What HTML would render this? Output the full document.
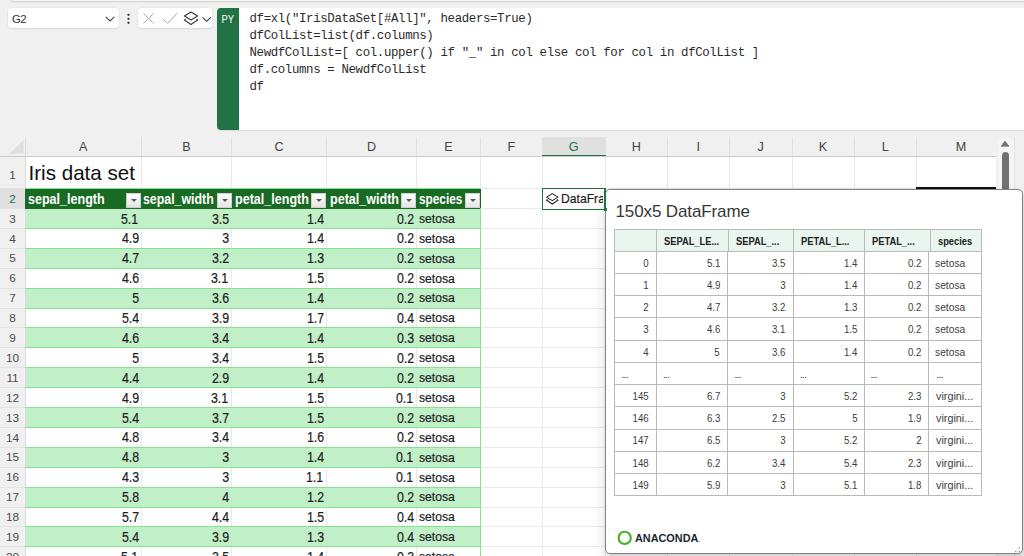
<!DOCTYPE html>
<html><head><meta charset="utf-8"><title>Excel</title>
<style>
*{box-sizing:border-box;margin:0;padding:0}
html,body{width:1024px;height:556px;overflow:hidden;background:#f0f0f0;font-family:"Liberation Sans",sans-serif}
#app{position:relative;width:1024px;height:556px;overflow:hidden;background:#f0f0f0}
.abs{position:absolute}
.box{position:absolute;background:#fff;border-radius:4px;box-shadow:0 0 0 .5px #e2e2e2,0 1px 1.5px rgba(0,0,0,.12)}
.code{position:absolute;left:249.5px;top:11.25px;font-family:"Liberation Mono",monospace;font-size:12.4px;letter-spacing:-.361px;line-height:17px;color:#2b2b2b;white-space:pre}
.ch{position:absolute;top:137.7px;height:19px;text-align:center;font-size:12.6px;line-height:18px;color:#444}
.rh{position:absolute;left:0;width:25px;text-align:center;font-size:11.8px;color:#4c4c4c;height:20px;line-height:20px}
.vl{position:absolute;width:1px;background:#e9e9e9}
.hl{position:absolute;height:1px;background:#e9e9e9}
.band{position:absolute;left:25.5px;width:454.7px;height:20px}
.c{position:absolute;height:20px;line-height:20px;font-size:14.5px;color:#1c1c1c;white-space:nowrap;-webkit-text-stroke:.2px #1c1c1c}
.c span{display:inline-block;transform:scaleX(.855)}
.r{text-align:right}.r span{transform-origin:100% 50%}
.l{font-size:13.7px}.l span{transform-origin:0 50%;transform:scaleX(.89)}
.th{position:absolute;top:189.5px;height:20px;line-height:19px;font-size:14.4px;font-weight:bold;color:#fff;white-space:nowrap}
.th span{display:inline-block;transform-origin:0 50%;transform:scaleX(.872)}
.fb{position:absolute;top:192.5px;width:15px;height:15px;background:linear-gradient(#fff,#e4e4e4);border:.5px solid #d0d0d0}
.fb:after{content:"";position:absolute;left:4px;top:5.8px;border:3px solid transparent;border-top:3.2px solid #5a5a5a;border-bottom:0}
.pt{position:absolute;font-size:11.8px;color:#3d3d3d;white-space:nowrap;line-height:22px;height:22px}
.pt span{display:inline-block;transform:scaleX(.82);transform-origin:100% 50%}
.pl span{transform-origin:0 50%;transform:scaleX(.87)}
.ph{font-weight:bold;color:#222;font-size:10.9px}.ph span{transform-origin:0 50%;transform:scaleX(.855)}
</style></head><body><div id="app">

<div class="abs" style="left:10.3px;top:-6px;width:1030px;height:7.4px;background:#f4f4f4;border-radius:4px;box-shadow:0 .6px 2.2px rgba(0,0,0,.2)"></div>
<div class="box" style="left:7.7px;top:8.1px;width:111.4px;height:20.3px"></div>
<div class="abs" style="left:12px;top:10px;font-size:11.4px;line-height:19px;color:#333;letter-spacing:-.6px">G2</div>
<svg class="abs" style="left:104px;top:15px" width="12" height="8" viewBox="0 0 12 8"><path d="M1.7 1.8 L6 6 L10.3 1.8" fill="none" stroke="#444" stroke-width="1.1"/></svg>
<svg class="abs" style="left:126px;top:12px" width="5" height="14" viewBox="0 0 5 14"><circle cx="2.5" cy="2.8" r="1.15" fill="#333"/><circle cx="2.5" cy="6.8" r="1.15" fill="#333"/><circle cx="2.5" cy="10.8" r="1.15" fill="#333"/></svg>
<div class="box" style="left:137.6px;top:8.1px;width:74.6px;height:20.3px"></div>
<svg class="abs" style="left:137px;top:8px" width="76" height="21" viewBox="0 0 76 21"><path d="M6.5 5.5 L16.5 15.5 M16.5 5.5 L6.5 15.5" stroke="#a8a8a8" stroke-width="1" fill="none"/><path d="M26 11 L30.8 15.3 L40 5.2" stroke="#a8a8a8" stroke-width="1" fill="none"/><path d="M54 4 L60.6 8 L54 12 L47.4 8 Z" stroke="#3a3a3a" stroke-width="1.15" fill="none" stroke-linejoin="round"/><path d="M48.6 11.2 L47.4 12 L54 16.4 L60.6 12 L59.4 11.2" stroke="#3a3a3a" stroke-width="1.15" fill="none" stroke-linejoin="round"/><path d="M65.6 9.3 L69.7 13.3 L73.8 9.3" stroke="#3a3a3a" stroke-width="1.1" fill="none"/></svg>
<div class="abs" style="left:217.2px;top:8.1px;width:820px;height:122.1px;background:#fff;border-radius:4px 0 0 4px;box-shadow:0 .5px 1px rgba(0,0,0,.09)"></div>
<div class="abs" style="left:217.2px;top:8.1px;width:21.4px;height:122.1px;background:#217346;border-radius:4px 0 0 4px"></div>
<div class="abs" style="left:217.2px;top:10.1px;width:21.4px;text-align:center;font-size:11.8px;line-height:19px;color:#fff"><span style="display:inline-block;transform:scaleX(.8)">PY</span></div>
<div class="code">df=xl("IrisDataSet[#All]", headers=True)
dfColList=list(df.columns)
NewdfColList=[ col.upper() if "_" in col else col for col in dfColList ]
df.columns = NewdfColList
df</div>
<div class="abs" style="left:25px;top:156px;width:971px;height:400px;background:#fff"></div>
<div class="vl" style="left:141.0px;top:156px;height:400px"></div>
<div class="vl" style="left:231.0px;top:156px;height:400px"></div>
<div class="vl" style="left:326.0px;top:156px;height:400px"></div>
<div class="vl" style="left:416.0px;top:156px;height:400px"></div>
<div class="vl" style="left:480.0px;top:156px;height:400px"></div>
<div class="vl" style="left:541.5px;top:156px;height:400px"></div>
<div class="vl" style="left:605.0px;top:156px;height:400px"></div>
<div class="vl" style="left:666.5px;top:156px;height:400px"></div>
<div class="vl" style="left:729.0px;top:156px;height:400px"></div>
<div class="vl" style="left:791.5px;top:156px;height:400px"></div>
<div class="vl" style="left:853.5px;top:156px;height:400px"></div>
<div class="vl" style="left:916.0px;top:156px;height:400px"></div>
<div class="hl" style="left:25px;top:188px;width:971px"></div>
<div class="hl" style="left:25px;top:208.0px;width:971px"></div>
<div class="hl" style="left:25px;top:227.9px;width:971px"></div>
<div class="hl" style="left:25px;top:247.79999999999998px;width:971px"></div>
<div class="hl" style="left:25px;top:267.70000000000005px;width:971px"></div>
<div class="hl" style="left:25px;top:287.6px;width:971px"></div>
<div class="hl" style="left:25px;top:307.5px;width:971px"></div>
<div class="hl" style="left:25px;top:327.40000000000003px;width:971px"></div>
<div class="hl" style="left:25px;top:347.3px;width:971px"></div>
<div class="hl" style="left:25px;top:367.20000000000005px;width:971px"></div>
<div class="hl" style="left:25px;top:387.1px;width:971px"></div>
<div class="hl" style="left:25px;top:407.0px;width:971px"></div>
<div class="hl" style="left:25px;top:426.90000000000003px;width:971px"></div>
<div class="hl" style="left:25px;top:446.8px;width:971px"></div>
<div class="hl" style="left:25px;top:466.70000000000005px;width:971px"></div>
<div class="hl" style="left:25px;top:486.6px;width:971px"></div>
<div class="hl" style="left:25px;top:506.5px;width:971px"></div>
<div class="hl" style="left:25px;top:526.4px;width:971px"></div>
<div class="hl" style="left:25px;top:546.3000000000001px;width:971px"></div>
<div class="ch" style="left:25px;width:116.5px">A</div>
<div class="vl" style="left:141.0px;top:137px;height:19px;background:#dfdfdf"></div>
<div class="ch" style="left:141.5px;width:90.0px">B</div>
<div class="vl" style="left:231.0px;top:137px;height:19px;background:#dfdfdf"></div>
<div class="ch" style="left:231.5px;width:95.0px">C</div>
<div class="vl" style="left:326.0px;top:137px;height:19px;background:#dfdfdf"></div>
<div class="ch" style="left:326.5px;width:90.0px">D</div>
<div class="vl" style="left:416.0px;top:137px;height:19px;background:#dfdfdf"></div>
<div class="ch" style="left:416.5px;width:64.0px">E</div>
<div class="vl" style="left:480.0px;top:137px;height:19px;background:#dfdfdf"></div>
<div class="ch" style="left:480.5px;width:61.5px">F</div>
<div class="abs" style="left:542px;top:137px;width:63.5px;height:19px;background:#e0e0e0"></div>
<div class="ch" style="left:542px;width:63.5px;color:#217346">G</div>
<div class="ch" style="left:605.5px;width:61.5px">H</div>
<div class="vl" style="left:666.5px;top:137px;height:19px;background:#dfdfdf"></div>
<div class="ch" style="left:667px;width:62.5px">I</div>
<div class="vl" style="left:729.0px;top:137px;height:19px;background:#dfdfdf"></div>
<div class="ch" style="left:729.5px;width:62.5px">J</div>
<div class="vl" style="left:791.5px;top:137px;height:19px;background:#dfdfdf"></div>
<div class="ch" style="left:792px;width:62px">K</div>
<div class="vl" style="left:853.5px;top:137px;height:19px;background:#dfdfdf"></div>
<div class="ch" style="left:854px;width:62.5px">L</div>
<div class="vl" style="left:916.0px;top:137px;height:19px;background:#dfdfdf"></div>
<div class="ch" style="left:916.5px;width:89.0px">M</div>
<div class="abs" style="left:0;top:155.5px;width:996px;height:1px;background:#c9c9c9"></div>
<div class="abs" style="left:542px;top:154.9px;width:64px;height:1.5px;background:#217346"></div>
<svg class="abs" style="left:9px;top:139.5px" width="15" height="14" viewBox="0 0 15 14"><path d="M14.7 0 L14.7 13.8 L0.3 13.8 Z" fill="#dfdfdf"/></svg>
<div class="abs" style="left:24.5px;top:137px;width:1px;height:420px;background:#dadada"></div>
<div class="rh" style="top:165px">1</div>
<div class="abs" style="left:0;top:188.5px;width:24.5px;height:19.5px;background:#e0e0e0"></div>
<div class="rh" style="top:188.5px;color:#217346">2</div>
<div class="rh" style="top:208.6px">3</div>
<div class="rh" style="top:228.5px">4</div>
<div class="rh" style="top:248.39999999999998px">5</div>
<div class="rh" style="top:268.3px">6</div>
<div class="rh" style="top:288.2px">7</div>
<div class="rh" style="top:308.09999999999997px">8</div>
<div class="rh" style="top:328.0px">9</div>
<div class="rh" style="top:347.9px">10</div>
<div class="rh" style="top:367.8px">11</div>
<div class="rh" style="top:387.7px">12</div>
<div class="rh" style="top:407.59999999999997px">13</div>
<div class="rh" style="top:427.5px">14</div>
<div class="rh" style="top:447.4px">15</div>
<div class="rh" style="top:467.3px">16</div>
<div class="rh" style="top:487.2px">17</div>
<div class="rh" style="top:507.09999999999997px">18</div>
<div class="rh" style="top:527.0px">19</div>
<div class="rh" style="top:546.9000000000001px">20</div>
<div class="hl" style="left:0;top:188px;width:25px;background:#e3e3e3"></div>
<div class="hl" style="left:0;top:208.0px;width:25px;background:#e3e3e3"></div>
<div class="hl" style="left:0;top:227.9px;width:25px;background:#e3e3e3"></div>
<div class="hl" style="left:0;top:247.79999999999998px;width:25px;background:#e3e3e3"></div>
<div class="hl" style="left:0;top:267.70000000000005px;width:25px;background:#e3e3e3"></div>
<div class="hl" style="left:0;top:287.6px;width:25px;background:#e3e3e3"></div>
<div class="hl" style="left:0;top:307.5px;width:25px;background:#e3e3e3"></div>
<div class="hl" style="left:0;top:327.40000000000003px;width:25px;background:#e3e3e3"></div>
<div class="hl" style="left:0;top:347.3px;width:25px;background:#e3e3e3"></div>
<div class="hl" style="left:0;top:367.20000000000005px;width:25px;background:#e3e3e3"></div>
<div class="hl" style="left:0;top:387.1px;width:25px;background:#e3e3e3"></div>
<div class="hl" style="left:0;top:407.0px;width:25px;background:#e3e3e3"></div>
<div class="hl" style="left:0;top:426.90000000000003px;width:25px;background:#e3e3e3"></div>
<div class="hl" style="left:0;top:446.8px;width:25px;background:#e3e3e3"></div>
<div class="hl" style="left:0;top:466.70000000000005px;width:25px;background:#e3e3e3"></div>
<div class="hl" style="left:0;top:486.6px;width:25px;background:#e3e3e3"></div>
<div class="hl" style="left:0;top:506.5px;width:25px;background:#e3e3e3"></div>
<div class="hl" style="left:0;top:526.4px;width:25px;background:#e3e3e3"></div>
<div class="hl" style="left:0;top:546.3000000000001px;width:25px;background:#e3e3e3"></div>
<div class="abs" style="left:28.5px;top:158px;font-size:20.6px;line-height:29px;color:#111;white-space:nowrap;letter-spacing:0">Iris data set</div>
<div class="band" style="top:208.0px;height:20.4px;background:#c1f0c8"></div>
<div class="band" style="top:247.79999999999998px;height:20.4px;background:#c1f0c8"></div>
<div class="band" style="top:287.6px;height:20.4px;background:#c1f0c8"></div>
<div class="band" style="top:327.40000000000003px;height:20.4px;background:#c1f0c8"></div>
<div class="band" style="top:367.20000000000005px;height:20.4px;background:#c1f0c8"></div>
<div class="band" style="top:407.0px;height:20.4px;background:#c1f0c8"></div>
<div class="band" style="top:446.8px;height:20.4px;background:#c1f0c8"></div>
<div class="band" style="top:486.6px;height:20.4px;background:#c1f0c8"></div>
<div class="band" style="top:526.4px;height:20.4px;background:#c1f0c8"></div>
<div class="hl" style="left:25px;top:208.00px;width:455.4px;background:#83e28e"></div>
<div class="hl" style="left:25px;top:227.90px;width:455.4px;background:#83e28e"></div>
<div class="hl" style="left:25px;top:247.80px;width:455.4px;background:#83e28e"></div>
<div class="hl" style="left:25px;top:267.70px;width:455.4px;background:#83e28e"></div>
<div class="hl" style="left:25px;top:287.60px;width:455.4px;background:#83e28e"></div>
<div class="hl" style="left:25px;top:307.50px;width:455.4px;background:#83e28e"></div>
<div class="hl" style="left:25px;top:327.40px;width:455.4px;background:#83e28e"></div>
<div class="hl" style="left:25px;top:347.30px;width:455.4px;background:#83e28e"></div>
<div class="hl" style="left:25px;top:367.20px;width:455.4px;background:#83e28e"></div>
<div class="hl" style="left:25px;top:387.10px;width:455.4px;background:#83e28e"></div>
<div class="hl" style="left:25px;top:407.00px;width:455.4px;background:#83e28e"></div>
<div class="hl" style="left:25px;top:426.90px;width:455.4px;background:#83e28e"></div>
<div class="hl" style="left:25px;top:446.80px;width:455.4px;background:#83e28e"></div>
<div class="hl" style="left:25px;top:466.70px;width:455.4px;background:#83e28e"></div>
<div class="hl" style="left:25px;top:486.60px;width:455.4px;background:#83e28e"></div>
<div class="hl" style="left:25px;top:506.50px;width:455.4px;background:#83e28e"></div>
<div class="hl" style="left:25px;top:526.40px;width:455.4px;background:#83e28e"></div>
<div class="hl" style="left:25px;top:546.30px;width:455.4px;background:#83e28e"></div>
<div class="hl" style="left:25px;top:566.20px;width:455.4px;background:#83e28e"></div>
<div class="c r" style="left:25px;width:112.9px;top:208.50px"><span>5.1</span></div>
<div class="c r" style="left:141.5px;width:87.5px;top:208.50px"><span>3.5</span></div>
<div class="c r" style="left:231.5px;width:92.5px;top:208.50px"><span>1.4</span></div>
<div class="c r" style="left:326.5px;width:87.5px;top:208.50px"><span>0.2</span></div>
<div class="c l" style="left:419.3px;top:208.80px"><span>setosa</span></div>
<div class="c r" style="left:25px;width:114.0px;top:228.40px"><span>4.9</span></div>
<div class="c r" style="left:141.5px;width:87.5px;top:228.40px"><span>3</span></div>
<div class="c r" style="left:231.5px;width:92.5px;top:228.40px"><span>1.4</span></div>
<div class="c r" style="left:326.5px;width:87.5px;top:228.40px"><span>0.2</span></div>
<div class="c l" style="left:419.3px;top:228.70px"><span>setosa</span></div>
<div class="c r" style="left:25px;width:114.0px;top:248.30px"><span>4.7</span></div>
<div class="c r" style="left:141.5px;width:87.5px;top:248.30px"><span>3.2</span></div>
<div class="c r" style="left:231.5px;width:92.5px;top:248.30px"><span>1.3</span></div>
<div class="c r" style="left:326.5px;width:87.5px;top:248.30px"><span>0.2</span></div>
<div class="c l" style="left:419.3px;top:248.60px"><span>setosa</span></div>
<div class="c r" style="left:25px;width:114.0px;top:268.20px"><span>4.6</span></div>
<div class="c r" style="left:141.5px;width:86.4px;top:268.20px"><span>3.1</span></div>
<div class="c r" style="left:231.5px;width:92.5px;top:268.20px"><span>1.5</span></div>
<div class="c r" style="left:326.5px;width:87.5px;top:268.20px"><span>0.2</span></div>
<div class="c l" style="left:419.3px;top:268.50px"><span>setosa</span></div>
<div class="c r" style="left:25px;width:114.0px;top:288.10px"><span>5</span></div>
<div class="c r" style="left:141.5px;width:87.5px;top:288.10px"><span>3.6</span></div>
<div class="c r" style="left:231.5px;width:92.5px;top:288.10px"><span>1.4</span></div>
<div class="c r" style="left:326.5px;width:87.5px;top:288.10px"><span>0.2</span></div>
<div class="c l" style="left:419.3px;top:288.40px"><span>setosa</span></div>
<div class="c r" style="left:25px;width:114.0px;top:308.00px"><span>5.4</span></div>
<div class="c r" style="left:141.5px;width:87.5px;top:308.00px"><span>3.9</span></div>
<div class="c r" style="left:231.5px;width:92.5px;top:308.00px"><span>1.7</span></div>
<div class="c r" style="left:326.5px;width:87.5px;top:308.00px"><span>0.4</span></div>
<div class="c l" style="left:419.3px;top:308.30px"><span>setosa</span></div>
<div class="c r" style="left:25px;width:114.0px;top:327.90px"><span>4.6</span></div>
<div class="c r" style="left:141.5px;width:87.5px;top:327.90px"><span>3.4</span></div>
<div class="c r" style="left:231.5px;width:92.5px;top:327.90px"><span>1.4</span></div>
<div class="c r" style="left:326.5px;width:87.5px;top:327.90px"><span>0.3</span></div>
<div class="c l" style="left:419.3px;top:328.20px"><span>setosa</span></div>
<div class="c r" style="left:25px;width:114.0px;top:347.80px"><span>5</span></div>
<div class="c r" style="left:141.5px;width:87.5px;top:347.80px"><span>3.4</span></div>
<div class="c r" style="left:231.5px;width:92.5px;top:347.80px"><span>1.5</span></div>
<div class="c r" style="left:326.5px;width:87.5px;top:347.80px"><span>0.2</span></div>
<div class="c l" style="left:419.3px;top:348.10px"><span>setosa</span></div>
<div class="c r" style="left:25px;width:114.0px;top:367.70px"><span>4.4</span></div>
<div class="c r" style="left:141.5px;width:87.5px;top:367.70px"><span>2.9</span></div>
<div class="c r" style="left:231.5px;width:92.5px;top:367.70px"><span>1.4</span></div>
<div class="c r" style="left:326.5px;width:87.5px;top:367.70px"><span>0.2</span></div>
<div class="c l" style="left:419.3px;top:368.00px"><span>setosa</span></div>
<div class="c r" style="left:25px;width:114.0px;top:387.60px"><span>4.9</span></div>
<div class="c r" style="left:141.5px;width:86.4px;top:387.60px"><span>3.1</span></div>
<div class="c r" style="left:231.5px;width:92.5px;top:387.60px"><span>1.5</span></div>
<div class="c r" style="left:326.5px;width:86.4px;top:387.60px"><span>0.1</span></div>
<div class="c l" style="left:419.3px;top:387.90px"><span>setosa</span></div>
<div class="c r" style="left:25px;width:114.0px;top:407.50px"><span>5.4</span></div>
<div class="c r" style="left:141.5px;width:87.5px;top:407.50px"><span>3.7</span></div>
<div class="c r" style="left:231.5px;width:92.5px;top:407.50px"><span>1.5</span></div>
<div class="c r" style="left:326.5px;width:87.5px;top:407.50px"><span>0.2</span></div>
<div class="c l" style="left:419.3px;top:407.80px"><span>setosa</span></div>
<div class="c r" style="left:25px;width:114.0px;top:427.40px"><span>4.8</span></div>
<div class="c r" style="left:141.5px;width:87.5px;top:427.40px"><span>3.4</span></div>
<div class="c r" style="left:231.5px;width:92.5px;top:427.40px"><span>1.6</span></div>
<div class="c r" style="left:326.5px;width:87.5px;top:427.40px"><span>0.2</span></div>
<div class="c l" style="left:419.3px;top:427.70px"><span>setosa</span></div>
<div class="c r" style="left:25px;width:114.0px;top:447.30px"><span>4.8</span></div>
<div class="c r" style="left:141.5px;width:87.5px;top:447.30px"><span>3</span></div>
<div class="c r" style="left:231.5px;width:92.5px;top:447.30px"><span>1.4</span></div>
<div class="c r" style="left:326.5px;width:86.4px;top:447.30px"><span>0.1</span></div>
<div class="c l" style="left:419.3px;top:447.60px"><span>setosa</span></div>
<div class="c r" style="left:25px;width:114.0px;top:467.20px"><span>4.3</span></div>
<div class="c r" style="left:141.5px;width:87.5px;top:467.20px"><span>3</span></div>
<div class="c r" style="left:231.5px;width:91.4px;top:467.20px"><span>1.1</span></div>
<div class="c r" style="left:326.5px;width:86.4px;top:467.20px"><span>0.1</span></div>
<div class="c l" style="left:419.3px;top:467.50px"><span>setosa</span></div>
<div class="c r" style="left:25px;width:114.0px;top:487.10px"><span>5.8</span></div>
<div class="c r" style="left:141.5px;width:87.5px;top:487.10px"><span>4</span></div>
<div class="c r" style="left:231.5px;width:92.5px;top:487.10px"><span>1.2</span></div>
<div class="c r" style="left:326.5px;width:87.5px;top:487.10px"><span>0.2</span></div>
<div class="c l" style="left:419.3px;top:487.40px"><span>setosa</span></div>
<div class="c r" style="left:25px;width:114.0px;top:507.00px"><span>5.7</span></div>
<div class="c r" style="left:141.5px;width:87.5px;top:507.00px"><span>4.4</span></div>
<div class="c r" style="left:231.5px;width:92.5px;top:507.00px"><span>1.5</span></div>
<div class="c r" style="left:326.5px;width:87.5px;top:507.00px"><span>0.4</span></div>
<div class="c l" style="left:419.3px;top:507.30px"><span>setosa</span></div>
<div class="c r" style="left:25px;width:114.0px;top:526.90px"><span>5.4</span></div>
<div class="c r" style="left:141.5px;width:87.5px;top:526.90px"><span>3.9</span></div>
<div class="c r" style="left:231.5px;width:92.5px;top:526.90px"><span>1.3</span></div>
<div class="c r" style="left:326.5px;width:87.5px;top:526.90px"><span>0.4</span></div>
<div class="c l" style="left:419.3px;top:527.20px"><span>setosa</span></div>
<div class="c r" style="left:25px;width:112.9px;top:546.80px"><span>5.1</span></div>
<div class="c r" style="left:141.5px;width:87.5px;top:546.80px"><span>3.5</span></div>
<div class="c r" style="left:231.5px;width:92.5px;top:546.80px"><span>1.4</span></div>
<div class="c r" style="left:326.5px;width:87.5px;top:546.80px"><span>0.3</span></div>
<div class="c l" style="left:419.3px;top:547.10px"><span>setosa</span></div>
<div class="abs" style="left:25px;top:187.9px;width:455.4px;height:1px;background:#83e28e"></div>
<div class="abs" style="left:25px;top:188.9px;width:455.7px;height:19.8px;background:#196b24"></div>
<div class="th" style="left:28.1px"><span>sepal_length</span></div>
<div class="fb" style="left:126.4px"></div>
<div class="th" style="left:143px"><span style="transform:scaleX(.858)">sepal_width</span></div>
<div class="fb" style="left:217.0px"></div>
<div class="th" style="left:235px"><span>petal_length</span></div>
<div class="fb" style="left:311.4px"></div>
<div class="th" style="left:330.4px"><span>petal_width</span></div>
<div class="fb" style="left:401.4px"></div>
<div class="th" style="left:418.9px"><span style="transform:scaleX(.82)">species</span></div>
<div class="fb" style="left:465.4px"></div>
<div class="abs" style="left:479.9px;top:208px;width:1px;height:348px;background:#83e28e"></div>
<div class="abs" style="left:916px;top:187px;width:80px;height:2.5px;background:#111"></div>
<div class="abs" style="left:542px;top:187.7px;width:64.1px;height:21.9px;border:1.7px solid #217346;background:#fff"></div>
<svg class="abs" style="left:545px;top:192px" width="15" height="15" viewBox="0 0 15 15"><path d="M7.3 1.6 L13 5.1 L7.3 8.6 L1.6 5.1 Z" stroke="#222" stroke-width="1.05" fill="none" stroke-linejoin="round"/><path d="M2.7 7.5 L1.6 8.2 L7.3 12 L13 8.2 L11.9 7.5" stroke="#222" stroke-width="1.05" fill="none" stroke-linejoin="round"/></svg>
<div class="c l" style="left:561px;top:189px;width:42.4px;overflow:hidden;font-size:13.5px"><span style="transform:scaleX(.9)">DataFrame</span></div>
<div class="abs" style="left:603.5px;top:207.5px;width:3px;height:3px;background:#217346"></div>
<div class="abs" style="left:998px;top:137px;width:16.5px;height:430px;background:#f5f5f5;border-radius:8px 8px 0 0"></div>
<div class="abs" style="left:1014px;top:137px;width:1px;height:430px;background:#e2e2e2"></div>
<svg class="abs" style="left:1000px;top:140px" width="10" height="8" viewBox="0 0 10 8"><path d="M5 1 L9 6.3 L1 6.3 Z" fill="#707070" stroke="#707070" stroke-width=".6" stroke-linejoin="round"/></svg>
<div class="abs" style="left:1001.5px;top:151.5px;width:7.5px;height:200px;background:#717171;border-radius:4px"></div>
<div class="abs" style="left:605px;top:189px;width:1018px;height:0"></div>
<div class="abs" style="left:605.1px;top:189px;width:417.9px;height:364.5px;background:#fff;border:1.4px solid #828282;border-radius:5px;box-shadow:0 6.4px 14.4px rgba(0,0,0,.12),0 1.2px 3.6px rgba(0,0,0,.09)"></div>
<div class="abs" style="left:615.5px;top:201.4px;font-size:17px;line-height:22px;color:#363636;white-space:nowrap;letter-spacing:-.12px">150x5 DataFrame</div>
<div class="abs" style="left:614.6px;top:229.8px;width:366.79999999999995px;height:21.4px;background:#e9f5ee"></div>
<div class="abs" style="left:614.6px;top:229.30px;width:367.29999999999995px;height:1px;background:#b9b9b9"></div>
<div class="abs" style="left:614.6px;top:250.70px;width:367.29999999999995px;height:1px;background:#b9b9b9"></div>
<div class="abs" style="left:614.6px;top:272.93px;width:367.29999999999995px;height:1px;background:#b9b9b9"></div>
<div class="abs" style="left:614.6px;top:295.16px;width:367.29999999999995px;height:1px;background:#b9b9b9"></div>
<div class="abs" style="left:614.6px;top:317.39px;width:367.29999999999995px;height:1px;background:#b9b9b9"></div>
<div class="abs" style="left:614.6px;top:339.62px;width:367.29999999999995px;height:1px;background:#b9b9b9"></div>
<div class="abs" style="left:614.6px;top:361.85px;width:367.29999999999995px;height:1px;background:#b9b9b9"></div>
<div class="abs" style="left:614.6px;top:384.08px;width:367.29999999999995px;height:1px;background:#b9b9b9"></div>
<div class="abs" style="left:614.6px;top:406.31px;width:367.29999999999995px;height:1px;background:#b9b9b9"></div>
<div class="abs" style="left:614.6px;top:428.54px;width:367.29999999999995px;height:1px;background:#b9b9b9"></div>
<div class="abs" style="left:614.6px;top:450.77px;width:367.29999999999995px;height:1px;background:#b9b9b9"></div>
<div class="abs" style="left:614.6px;top:473.00px;width:367.29999999999995px;height:1px;background:#b9b9b9"></div>
<div class="abs" style="left:614.6px;top:495.23px;width:367.29999999999995px;height:1px;background:#b9b9b9"></div>
<div class="abs" style="left:614.1px;top:229.3px;width:1px;height:21.90px;background:#b9b9b9"></div>
<div class="abs" style="left:656.1px;top:229.3px;width:1px;height:21.90px;background:#b9b9b9"></div>
<div class="abs" style="left:727.5px;top:229.3px;width:1px;height:21.90px;background:#b9b9b9"></div>
<div class="abs" style="left:793.3px;top:229.3px;width:1px;height:21.90px;background:#b9b9b9"></div>
<div class="abs" style="left:864.1px;top:229.3px;width:1px;height:21.90px;background:#b9b9b9"></div>
<div class="abs" style="left:929.7px;top:229.3px;width:1px;height:21.90px;background:#b9b9b9"></div>
<div class="abs" style="left:980.9px;top:229.3px;width:1px;height:21.90px;background:#b9b9b9"></div>
<div class="abs" style="left:614.1px;top:250.70px;width:1px;height:245.53px;background:#b9b9b9"></div>
<div class="abs" style="left:656.1px;top:250.70px;width:1px;height:245.53px;background:#b9b9b9"></div>
<div class="abs" style="left:726.9px;top:250.70px;width:1px;height:245.53px;background:#b9b9b9"></div>
<div class="abs" style="left:793.3px;top:250.70px;width:1px;height:245.53px;background:#b9b9b9"></div>
<div class="abs" style="left:863.8px;top:250.70px;width:1px;height:245.53px;background:#b9b9b9"></div>
<div class="abs" style="left:928.1px;top:250.70px;width:1px;height:245.53px;background:#b9b9b9"></div>
<div class="abs" style="left:980.9px;top:250.70px;width:1px;height:245.53px;background:#b9b9b9"></div>
<div class="pt ph" style="left:664.3px;top:230.0px"><span>SEPAL_LE...</span></div>
<div class="pt ph" style="left:735.8px;top:230.0px"><span>SEPAL_...</span></div>
<div class="pt ph" style="left:801.3px;top:230.0px"><span>PETAL_L...</span></div>
<div class="pt ph" style="left:871.8px;top:230.0px"><span>PETAL_...</span></div>
<div class="pt ph" style="left:937.8px;top:230.0px"><span>species</span></div>
<div class="pt" style="left:614.6px;width:33.89999999999998px;text-align:right;top:251.65px"><span>0</span></div>
<div class="pt" style="left:656.5px;width:63.5px;text-align:right;top:251.65px"><span>5.1</span></div>
<div class="pt" style="left:728px;width:57.5px;text-align:right;top:251.65px"><span>3.5</span></div>
<div class="pt" style="left:793.5px;width:64.2px;text-align:right;top:251.65px"><span>1.4</span></div>
<div class="pt" style="left:864px;width:57.5px;text-align:right;top:251.65px"><span>0.2</span></div>
<div class="pt pl" style="left:935.3px;top:251.65px"><span>setosa</span></div>
<div class="pt" style="left:614.6px;width:33.89999999999998px;text-align:right;top:273.88px"><span>1</span></div>
<div class="pt" style="left:656.5px;width:63.5px;text-align:right;top:273.88px"><span>4.9</span></div>
<div class="pt" style="left:728px;width:57.5px;text-align:right;top:273.88px"><span>3</span></div>
<div class="pt" style="left:793.5px;width:64.2px;text-align:right;top:273.88px"><span>1.4</span></div>
<div class="pt" style="left:864px;width:57.5px;text-align:right;top:273.88px"><span>0.2</span></div>
<div class="pt pl" style="left:935.3px;top:273.88px"><span>setosa</span></div>
<div class="pt" style="left:614.6px;width:33.89999999999998px;text-align:right;top:296.11px"><span>2</span></div>
<div class="pt" style="left:656.5px;width:63.5px;text-align:right;top:296.11px"><span>4.7</span></div>
<div class="pt" style="left:728px;width:57.5px;text-align:right;top:296.11px"><span>3.2</span></div>
<div class="pt" style="left:793.5px;width:64.2px;text-align:right;top:296.11px"><span>1.3</span></div>
<div class="pt" style="left:864px;width:57.5px;text-align:right;top:296.11px"><span>0.2</span></div>
<div class="pt pl" style="left:935.3px;top:296.11px"><span>setosa</span></div>
<div class="pt" style="left:614.6px;width:33.89999999999998px;text-align:right;top:318.34px"><span>3</span></div>
<div class="pt" style="left:656.5px;width:63.5px;text-align:right;top:318.34px"><span>4.6</span></div>
<div class="pt" style="left:728px;width:57.5px;text-align:right;top:318.34px"><span>3.1</span></div>
<div class="pt" style="left:793.5px;width:64.2px;text-align:right;top:318.34px"><span>1.5</span></div>
<div class="pt" style="left:864px;width:57.5px;text-align:right;top:318.34px"><span>0.2</span></div>
<div class="pt pl" style="left:935.3px;top:318.34px"><span>setosa</span></div>
<div class="pt" style="left:614.6px;width:33.89999999999998px;text-align:right;top:340.57px"><span>4</span></div>
<div class="pt" style="left:656.5px;width:63.5px;text-align:right;top:340.57px"><span>5</span></div>
<div class="pt" style="left:728px;width:57.5px;text-align:right;top:340.57px"><span>3.6</span></div>
<div class="pt" style="left:793.5px;width:64.2px;text-align:right;top:340.57px"><span>1.4</span></div>
<div class="pt" style="left:864px;width:57.5px;text-align:right;top:340.57px"><span>0.2</span></div>
<div class="pt pl" style="left:935.3px;top:340.57px"><span>setosa</span></div>
<div class="pt" style="left:621.8000000000001px;top:364.50px;font-size:8px;letter-spacing:-.15px;color:#505050;font-weight:bold">...</div>
<div class="pt" style="left:663.3px;top:364.50px;font-size:8px;letter-spacing:-.15px;color:#505050;font-weight:bold">...</div>
<div class="pt" style="left:734.8px;top:364.50px;font-size:8px;letter-spacing:-.15px;color:#505050;font-weight:bold">...</div>
<div class="pt" style="left:800.3px;top:364.50px;font-size:8px;letter-spacing:-.15px;color:#505050;font-weight:bold">...</div>
<div class="pt" style="left:870.8px;top:364.50px;font-size:8px;letter-spacing:-.15px;color:#505050;font-weight:bold">...</div>
<div class="pt" style="left:936.8px;top:364.50px;font-size:8px;letter-spacing:-.15px;color:#505050;font-weight:bold">...</div>
<div class="pt" style="left:614.6px;width:33.89999999999998px;text-align:right;top:385.03px"><span>145</span></div>
<div class="pt" style="left:656.5px;width:63.5px;text-align:right;top:385.03px"><span>6.7</span></div>
<div class="pt" style="left:728px;width:57.5px;text-align:right;top:385.03px"><span>3</span></div>
<div class="pt" style="left:793.5px;width:64.2px;text-align:right;top:385.03px"><span>5.2</span></div>
<div class="pt" style="left:864px;width:57.5px;text-align:right;top:385.03px"><span>2.3</span></div>
<div class="pt pl" style="left:936.2px;top:385.03px"><span style="transform:scaleX(.915)">virgini...</span></div>
<div class="pt" style="left:614.6px;width:33.89999999999998px;text-align:right;top:407.26px"><span>146</span></div>
<div class="pt" style="left:656.5px;width:63.5px;text-align:right;top:407.26px"><span>6.3</span></div>
<div class="pt" style="left:728px;width:57.5px;text-align:right;top:407.26px"><span>2.5</span></div>
<div class="pt" style="left:793.5px;width:64.2px;text-align:right;top:407.26px"><span>5</span></div>
<div class="pt" style="left:864px;width:57.5px;text-align:right;top:407.26px"><span>1.9</span></div>
<div class="pt pl" style="left:936.2px;top:407.26px"><span style="transform:scaleX(.915)">virgini...</span></div>
<div class="pt" style="left:614.6px;width:33.89999999999998px;text-align:right;top:429.49px"><span>147</span></div>
<div class="pt" style="left:656.5px;width:63.5px;text-align:right;top:429.49px"><span>6.5</span></div>
<div class="pt" style="left:728px;width:57.5px;text-align:right;top:429.49px"><span>3</span></div>
<div class="pt" style="left:793.5px;width:64.2px;text-align:right;top:429.49px"><span>5.2</span></div>
<div class="pt" style="left:864px;width:57.5px;text-align:right;top:429.49px"><span>2</span></div>
<div class="pt pl" style="left:936.2px;top:429.49px"><span style="transform:scaleX(.915)">virgini...</span></div>
<div class="pt" style="left:614.6px;width:33.89999999999998px;text-align:right;top:451.72px"><span>148</span></div>
<div class="pt" style="left:656.5px;width:63.5px;text-align:right;top:451.72px"><span>6.2</span></div>
<div class="pt" style="left:728px;width:57.5px;text-align:right;top:451.72px"><span>3.4</span></div>
<div class="pt" style="left:793.5px;width:64.2px;text-align:right;top:451.72px"><span>5.4</span></div>
<div class="pt" style="left:864px;width:57.5px;text-align:right;top:451.72px"><span>2.3</span></div>
<div class="pt pl" style="left:936.2px;top:451.72px"><span style="transform:scaleX(.915)">virgini...</span></div>
<div class="pt" style="left:614.6px;width:33.89999999999998px;text-align:right;top:473.95px"><span>149</span></div>
<div class="pt" style="left:656.5px;width:63.5px;text-align:right;top:473.95px"><span>5.9</span></div>
<div class="pt" style="left:728px;width:57.5px;text-align:right;top:473.95px"><span>3</span></div>
<div class="pt" style="left:793.5px;width:64.2px;text-align:right;top:473.95px"><span>5.1</span></div>
<div class="pt" style="left:864px;width:57.5px;text-align:right;top:473.95px"><span>1.8</span></div>
<div class="pt pl" style="left:936.2px;top:473.95px"><span style="transform:scaleX(.915)">virgini...</span></div>
<div class="abs" style="left:604.4px;top:187.7px;width:1.7px;height:21.9px;background:#217346"></div>
<div class="abs" style="left:603.6px;top:207.6px;width:3px;height:3px;background:#217346"></div>
<svg class="abs" style="left:616px;top:529px" width="18" height="18" viewBox="0 0 18 18"><circle cx="8.7" cy="8.9" r="6.1" fill="none" stroke="#43b02a" stroke-width="2.1"/></svg>
<div class="abs" style="left:635px;top:530.8px;font-size:10.2px;line-height:16px;font-weight:bold;color:#1a2730;white-space:nowrap"><span style="display:inline-block;transform-origin:0 50%;transform:scaleX(1.066)">ANACONDA<span style="font-size:5px">.</span></span></div>
<svg class="abs" style="left:1012.6px;top:544.5px" width="9" height="9" viewBox="0 0 9 9"><rect x="5.6" y="2.4" width="1.6" height="1.2" fill="#999"/><rect x="2" y="5.8" width="1.4" height="1.4" fill="#999"/><rect x="5.6" y="5.8" width="1.6" height="1.4" fill="#999"/></svg>
</div></body></html>
